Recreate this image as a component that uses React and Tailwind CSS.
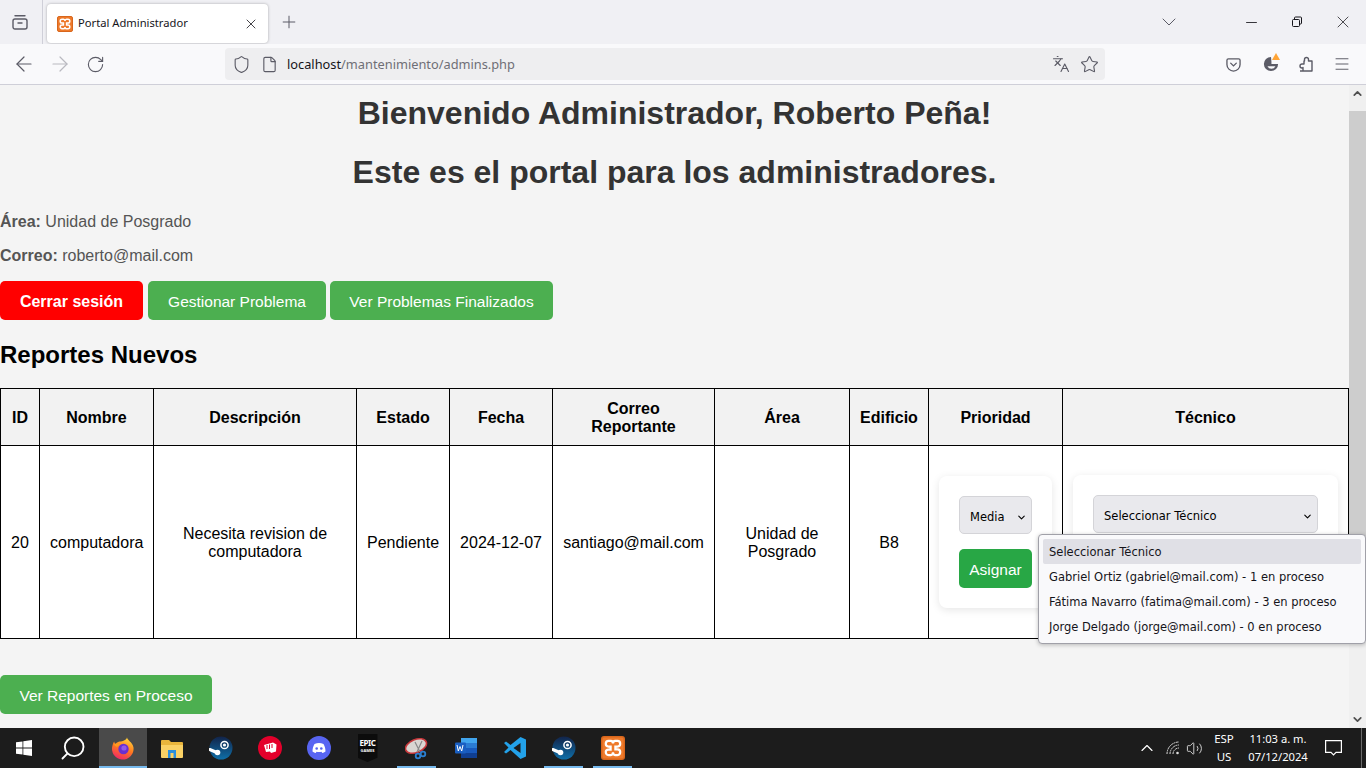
import React from "react";
import { ArrowLeft, ArrowRight, RotateCw, Shield, File, Star, Languages, Menu, ChevronDown, ChevronUp, Minus, X, Plus, Search, Volume2 } from "lucide-react";

const Xampp = ({ s = 16 }) => (
  <svg width={s} height={s} viewBox="0 0 16 16">
    <rect x="0.5" y="0.5" width="15" height="15" rx="1.5" fill="#ee7a2b" stroke="#d8661c" />
    <path d="M5 3.2h1.6c1 0 1.4 1 1.4 1.8 0-.8.4-1.8 1.4-1.8H11c1.2 0 1.8 1 1.8 2s-.8 1.800-1.800 1.800H9.600v1.900H11c1 0 1.800.8 1.800 1.800s-.6 2-1.800 2H9.400c-1 0-1.400-1-1.400-1.800 0 .8-.4 1.800-1.400 1.800H5c-1.200 0-1.800-1-1.800-2S4 9 5 9h1.400V7H5c-1 0-1.800-.8-1.800-1.800s.6-2 1.800-2z" fill="none" stroke="#fff" strokeWidth="1.5" />
  </svg>
);

const Steam = () => (
  <svg width="24" height="24" viewBox="0 0 24 24">
    <defs><linearGradient id="st" x1="0" y1="0" x2="0" y2="1"><stop offset="0" stopColor="#12244a" /><stop offset="1" stopColor="#0f6fa8" /></linearGradient></defs>
    <circle cx="12" cy="12" r="11.5" fill="url(#st)" />
    <circle cx="15.5" cy="9" r="3.6" fill="none" stroke="#fff" strokeWidth="1.5" />
    <circle cx="15.5" cy="9" r="1.6" fill="#fff" />
    <path d="M0.8 13.5l7 3" stroke="#fff" strokeWidth="3" strokeLinecap="round" />
    <circle cx="8.5" cy="16.5" r="2.8" fill="#fff" />
  </svg>
);

const TaskIcon = ({ children, active, underline, w = "w-[49px]" }) => (
  <div className={`relative ${w} h-10 flex items-center justify-center ${active ? "bg-[#4a4a4a]" : ""}`}>
    {children}
    {underline && <div className="absolute bottom-0 left-[5px] w-[39px] h-[2px] bg-[#76b9ed]" />}
    {active && <div className="absolute bottom-0 left-0 w-full h-[2px] bg-[#76b9ed]" />}
  </div>
);

const Th = ({ children }) => <th className="border border-black px-[10px] pt-[10px] pb-[8px] font-bold text-center leading-[18px]">{children}</th>;
const Td = ({ children }) => <td className="border border-black px-[10px] pt-[11px] pb-[10px] text-center leading-[18px]">{children}</td>;
const CardTd = ({ children }) => <td className="border border-black px-[10px] py-[10px] text-center leading-[18px]">{children}</td>;

const selectCls = "rounded-[5px] border border-[#d4d4d8] bg-[#e9e9ed] h-[38px] flex items-center text-[11.5px] text-black pt-[4px] font-['DejaVu_Sans',sans-serif]";

export default function App() {
  return (
    <div className="relative h-[768px] w-[1366px] overflow-hidden flex flex-col bg-[#f4f4f4] font-['Liberation_Sans',Arial,sans-serif]">
      {/* tab strip */}
      <div className="h-11 shrink-0 bg-[#f0f0f4] flex items-center">
        <div className="w-[43px] h-full flex items-center justify-center pr-[2px] border-r border-[#cfcfd8]">
          <svg width="16" height="16" viewBox="0 0 16 16" fill="none" stroke="#5b5b66" strokeWidth="1.4">
            <rect x="1" y="5" width="14" height="10" rx="2" />
            <path d="M3 1.700h10M6 9h4" strokeLinecap="round" />
          </svg>
        </div>
        <div className="ml-[4px] w-[221px] h-[39px] mt-[3px] rounded-[4px] bg-white shadow-[0_0_3px_rgba(0,0,0,0.3)] flex items-center pl-[10px] pr-[9px]">
          <Xampp s={16} />
          <span className="ml-[5px] text-[11.2px] text-[#15141a] font-['Noto_Sans',sans-serif]">Portal Administrador</span>
          <X className="ml-auto" size={16} color="#15141a" strokeWidth={1.2} />
        </div>
        <Plus className="ml-[11px]" size={20} color="#5b5b66" strokeWidth={1.2} />
        <ChevronDown className="ml-auto" size={24} color="#5b5b66" strokeWidth={1} />
        <div className="ml-[47px] w-[46px] flex justify-center"><Minus size={17} color="#15141a" strokeWidth={1.2} /></div>
        <div className="w-[46px] flex justify-center">
          <svg width="12" height="12" viewBox="0 0 12 12" fill="none" stroke="#15141a"><rect x="1.500" y="3.500" width="7" height="7" rx="1" /><path d="M3.500 3V2a1 1 0 0 1 1-1h5a1 1 0 0 1 1 1v5a1 1 0 0 1-1 1H9" /></svg>
        </div>
        <div className="w-[46px] flex justify-center"><X size={20} color="#15141a" strokeWidth={0.9} /></div>
      </div>
      {/* nav bar */}
      <div className="h-[41px] shrink-0 bg-[#f9f9fb] border-b border-[#cfcfd8] flex items-center">
        <ArrowLeft className="ml-[12px]" size={24} color="#5b5b66" strokeWidth={1.2} />
        <ArrowRight className="ml-[12px]" size={24} color="#b9b9c0" strokeWidth={1.2} />
        <RotateCw className="ml-[14px]" size={19} color="#5b5b66" strokeWidth={1.4} />
        <div className="ml-[120px] w-[880px] h-8 rounded-[4px] bg-[#eeeef0] flex items-center pl-[7px] pr-[6px]">
          <Shield size={19} color="#5b5b66" strokeWidth={1.4} />
          <File className="ml-[10px]" size={17} color="#5b5b66" strokeWidth={1.6} />
          <span className="ml-[9px] pt-[2px] text-[12.8px] font-['Noto_Sans',sans-serif] text-[#15141a]">localhost<span className="text-[#6e6e76]">/mantenimiento/admins.php</span></span>
          <Languages className="ml-auto" size={18} color="#5b5b66" strokeWidth={1.5} />
          <Star className="ml-[10px]" size={19} color="#5b5b66" strokeWidth={1.4} />
        </div>
        <svg className="ml-[121px]" width="15" height="15" viewBox="0 0 16 16" fill="none" stroke="#5b5b66" strokeWidth="1.4"><path d="M2.500 2h11A1.500 1.500 0 0 1 15 3.500V8a7 7 0 0 1-14 0V3.500A1.500 1.500 0 0 1 2.500 2z" /><path d="M5 6.500l3 3 3-3" strokeLinecap="round" /></svg>
        <div className="relative ml-[22px] w-[16px] h-[16px]">
          <svg width="16" height="16" viewBox="0 0 18 18"><path d="M9 1a8 8 0 1 0 8 8H9.500V6.500" fill="#5b5b66" /><path d="M5 11.500h9a5 5 0 0 1-9 0z" fill="#f9f9fb" /></svg>
          <div className="absolute -top-[3px] right-[-1px] w-0 h-0 border-l-[4px] border-r-[4px] border-b-[7px] border-l-transparent border-r-transparent border-b-[#ffa436]" />
        </div>
        <svg className="ml-[20px]" width="14" height="16" viewBox="0 0 14 16" fill="none" stroke="#5b5b66" strokeWidth="1.4" strokeLinejoin="round"><path d="M1 15h12V5H9.500V3.500a2 2 0 0 0-4 0V5H5v3H3a2 2 0 0 0 0 4h1v-.5 3.500" /></svg>
        <Menu className="ml-[20px]" size={18} color="#5b5b66" strokeWidth={1.3} />
      </div>
      {/* page */}
      <div className="relative flex-1 min-h-0 flex">
        <main className="flex-1 min-w-0 overflow-hidden">
          <h1 className="mt-[10px] text-[32px] leading-[37px] font-bold text-[#333] text-center">Bienvenido Administrador, Roberto Peña!</h1>
          <h2 className="mt-[22px] text-[32px] leading-[37px] font-bold text-[#333] text-center">Este es el portal para los administradores.</h2>
          <p className="mt-[22px] text-[16px] leading-[18px] text-[#555]"><b>Área:</b> Unidad de Posgrado</p>
          <p className="mt-[16px] text-[16px] leading-[18px] text-[#555]"><b>Correo:</b> roberto@mail.com</p>
          <div className="mt-[16px] flex gap-[5px] text-[15.5px]">
            <button className="h-[39px] w-[143px] pt-[3px] rounded-[5px] bg-[#ff0000] font-bold text-white text-[16px]">Cerrar sesión</button>
            <button className="h-[39px] w-[178px] pt-[3px] rounded-[5px] bg-[#4caf50] text-white">Gestionar Problema</button>
            <button className="h-[39px] w-[223px] pt-[3px] -ml-[1px] rounded-[5px] bg-[#4caf50] text-white">Ver Problemas Finalizados</button>
          </div>
          <h3 className="mt-[21px] text-[24px] leading-[28px] font-bold text-black">Reportes Nuevos</h3>
          <table className="mt-[19px] w-[1348.5px] table-fixed border-collapse bg-white text-[16px] text-black">
            <colgroup>
              <col className="w-[39px]" /><col className="w-[114px]" /><col className="w-[203px]" /><col className="w-[93px]" /><col className="w-[103px]" /><col className="w-[162px]" /><col className="w-[135px]" /><col className="w-[79px]" /><col className="w-[134px]" /><col className="w-[286px]" />
            </colgroup>
            <thead>
              <tr className="h-[57px] bg-[#f2f2f2]">
                <Th>ID</Th><Th>Nombre</Th><Th>Descripción</Th><Th>Estado</Th><Th>Fecha</Th><Th>Correo Reportante</Th><Th>Área</Th><Th>Edificio</Th><Th>Prioridad</Th><Th>Técnico</Th>
              </tr>
            </thead>
            <tbody>
              <tr className="h-[193px]">
                <Td>20</Td><Td>computadora</Td><Td>Necesita revision de computadora</Td><Td>Pendiente</Td><Td>2024-12-07</Td><Td>santiago@mail.com</Td><Td>Unidad de Posgrado</Td><Td>B8</Td>
                <CardTd>
                  <div className="rounded-[8px] bg-white shadow-[0_2px_8px_rgba(0,0,0,0.1)] p-5 flex flex-col gap-[15px]">
                    <div className={`${selectCls} justify-between pl-[10px] pr-[4px]`}>Media <ChevronDown size={11} color="#000" strokeWidth={2.4} /></div>
                    <button className="h-[39px] pt-[3px] rounded-[5px] bg-[#28a745] text-white text-[15.5px]">Asignar</button>
                  </div>
                </CardTd>
                <CardTd>
                  <div className="rounded-[8px] bg-white shadow-[0_2px_8px_rgba(0,0,0,0.1)] p-5 h-[134px]">
                    <div className={`${selectCls} justify-between pl-[10px] pr-[4px]`}>Seleccionar Técnico <ChevronDown size={11} color="#000" strokeWidth={2.4} /></div>
                  </div>
                </CardTd>
              </tr>
            </tbody>
          </table>
          <button className="mt-[36px] block h-[39px] w-[212px] pt-[3px] rounded-[5px] bg-[#4caf50] text-white text-[15.5px]">Ver Reportes en Proceso</button>
        </main>
        {/* scrollbar */}
        <div className="w-[17px] shrink-0 bg-[#f0f0f0] flex flex-col items-center">
          <div className="h-[17px] flex items-center justify-center"><ChevronUp size={13} color="#505050" strokeWidth={3.2} /></div>
          <div className="w-[17px] h-[530px] bg-[#cdcdcd] mt-[9px]" />
          <div className="mt-auto h-[17px] flex items-center justify-center"><ChevronDown size={13} color="#505050" strokeWidth={3.2} /></div>
        </div>
        {/* native dropdown popup, over the page and the scrollbar */}
        <div className="absolute left-[1038px] top-[449px] w-[328px] h-[110px] z-10 rounded-[4px] border border-[#a0a0a8] bg-[#f9f9fb] p-1 shadow-[0_1px_4px_rgba(0,0,0,0.25)] text-[11.5px] text-[#15141a] font-['DejaVu_Sans',sans-serif]">
          <div className="h-[25px] flex items-center px-[6px] pt-[2px] rounded-[2px] bg-[#e0e0e6]">Seleccionar Técnico</div>
          <div className="h-[25px] flex items-center px-[6px] pt-[2px]">Gabriel Ortiz (gabriel@mail.com) - 1 en proceso</div>
          <div className="h-[25px] flex items-center px-[6px] pt-[2px]">Fátima Navarro (fatima@mail.com) - 3 en proceso</div>
          <div className="h-[25px] flex items-center px-[6px] pt-[2px]">Jorge Delgado (jorge@mail.com) - 0 en proceso</div>
        </div>
      </div>
      {/* taskbar */}
      <div className="h-10 shrink-0 bg-[#1c1c1c] flex items-center font-['Noto_Sans',sans-serif]">
        <TaskIcon w="w-[47px]">
          <svg width="16" height="16" viewBox="0 0 16 16" fill="#fff"><path d="M0 2.300l6.500-.9v6.200H0zM7.300 1.300L16 0v7.600H7.300zM0 8.400h6.500v6.200L0 13.700zM7.300 8.400H16V16l-8.700-1.200z" /></svg>
        </TaskIcon>
        <TaskIcon w="w-[52px]"><Search size={28} color="#fff" strokeWidth={1.6} className="-scale-x-100" /></TaskIcon>
        <TaskIcon active w="w-[48px]">
          <svg width="24" height="24" viewBox="0 0 24 24">
            <defs><linearGradient id="ff" x1="0.7" y1="0" x2="0.3" y2="1"><stop offset="0" stopColor="#ffd93b" /><stop offset="0.5" stopColor="#ff7a1f" /><stop offset="1" stopColor="#f0246a" /></linearGradient></defs>
            <path d="M16 1c-.5 3 5.500 5 6.500 10.500A10.800 10.800 0 1 1 1.500 9.500c.3-1.500 1-3 1.700-4 .1 1.300.6 2 1.300 2.500C6 6 8 5.500 10 5.500c2.500-.5 6-2 6-4.500z" fill="url(#ff)" />
            <circle cx="12.500" cy="13" r="5.200" fill="#6a2fd0" />
            <circle cx="13" cy="12" r="2.600" fill="#9159e8" />
            <path d="M3 8c2.500-1 5-.5 7 1-1.500 0-3 .5-4 2-1-.5-2.500-1-3-3z" fill="#ff9a1f" />
          </svg>
        </TaskIcon>
        <TaskIcon>
          <svg width="22" height="20" viewBox="0 0 22 20"><path d="M0 3a1 1 0 0 1 1-1h7l2 2h11a1 1 0 0 1 1 1v14H0z" fill="#e9b53c" /><path d="M0 7h22v12a1 1 0 0 1-1 1H1a1 1 0 0 1-1-1z" fill="#fad165" /><path d="M7 12h8v8H7z" fill="#2b8fdc" /><path d="M9.500 15h3v5h-3z" fill="#fad165" /></svg>
        </TaskIcon>
        <TaskIcon><Steam /></TaskIcon>
        <TaskIcon>
          <svg width="24" height="24" viewBox="0 0 24 24"><circle cx="12" cy="12" r="12" fill="#e4002b" /><path d="M6 9l9-2.500 3.500 2-.5 7-5 1.500-1-1.500-4 .5z" fill="#fff" /><path d="M9 9v4M11.500 8.500v4.500M14 8v4" stroke="#e4002b" strokeWidth="1" /></svg>
        </TaskIcon>
        <TaskIcon>
          <svg width="24" height="24" viewBox="0 0 24 24"><circle cx="12" cy="12" r="12" fill="#5865f2" /><path d="M7.500 8c3-1.300 6-1.300 9 0 1.300 2.300 2 4.700 2 7.500-1 .8-2.200 1.300-3.200 1.500l-.8-1.300c-1.600.5-3.400.5-5 0L8.700 17c-1-.2-2.200-.7-3.200-1.500 0-2.800.7-5.200 2-7.500z" fill="#fff" /><circle cx="9.700" cy="12.500" r="1.300" fill="#5865f2" /><circle cx="14.300" cy="12.500" r="1.300" fill="#5865f2" /></svg>
        </TaskIcon>
        <TaskIcon>
          <div className="w-[20px] h-[28px] bg-[#0c0c0c] flex flex-col items-center justify-start pt-[4px] leading-none text-white [clip-path:polygon(0_0,100%_0,100%_85%,50%_100%,0_85%)]">
            <span className="text-[8px] font-bold leading-[10px] tracking-tighter">EPIC</span>
            <span className="text-[4px] font-bold leading-[6px]">GAMES</span>
          </div>
        </TaskIcon>
        <TaskIcon underline>
          <svg width="24" height="24" viewBox="0 0 24 24"><ellipse cx="11" cy="10" rx="11" ry="6.500" transform="rotate(-22 11 10)" fill="#d9d6d2" stroke="#c8383c" strokeWidth="1.600" /><path d="M10 6l5 10M17 5l-5 11" stroke="#888" strokeWidth="1.200" /><circle cx="13" cy="20" r="2.300" fill="none" stroke="#2b7fd0" strokeWidth="1.800" /><circle cx="18" cy="18" r="2.300" fill="none" stroke="#2b7fd0" strokeWidth="1.800" /></svg>
        </TaskIcon>
        <TaskIcon>
          <svg width="24" height="24" viewBox="0 0 24 24"><rect x="7" y="2" width="16" height="5" fill="#41a5ee" /><rect x="7" y="7" width="16" height="5" fill="#2b7cd3" /><rect x="7" y="12" width="16" height="5" fill="#185abd" /><rect x="7" y="17" width="16" height="5" fill="#103f91" /><rect x="1" y="6.500" width="11" height="11" rx="1" fill="#1a5fc2" /><path d="M3 9l1.300 6 1.700-4.500L7.700 15 9 9" fill="none" stroke="#fff" strokeWidth="1" /></svg>
        </TaskIcon>
        <TaskIcon>
          <svg width="24" height="24" viewBox="0 0 24 24"><path d="M17.500 1L23 3.500v17L17.500 23 7.500 14l-4.500 3.500L1 16l4.500-4.500L1 7l2-1.500L7.500 9z" fill="#23a2ea" /><path d="M17.500 7L10.500 12l7 5z" fill="#1c1c1c" /></svg>
        </TaskIcon>
        <TaskIcon underline><Steam /></TaskIcon>
        <TaskIcon underline><Xampp s={24} /></TaskIcon>
        <div className="ml-auto flex items-center text-white text-[11.5px] h-10 pr-[5px]">
          <ChevronUp size={20} color="#fff" strokeWidth={1.4} />
          <svg className="ml-[9px]" width="14" height="14" viewBox="0 0 14 14" fill="none" stroke="#ddd" strokeWidth="1"><path d="M1 13A12 12 0 0 1 13 1M4 13a9 9 0 0 1 9-9M7 13a6 6 0 0 1 6-6" strokeDasharray="2 .6" /><circle cx="11.500" cy="12" r="1.300" fill="#ddd" stroke="none" /></svg>
          <Volume2 className="ml-[6px]" size={17} color="#ddd" strokeWidth={1.3} />
          <div className="ml-[9px] w-[24px] flex flex-col items-center leading-[18px] text-center"><span>ESP</span><span>US</span></div>
          <div className="ml-[12px] w-[60px] flex flex-col items-center leading-[18px] whitespace-nowrap text-[11.2px]"><span>11:03 a. m.</span><span>07/12/2024</span></div>
          <svg className="ml-[17px] mr-[19px]" width="17" height="16" viewBox="0 0 17 16" fill="none" stroke="#fff" strokeWidth="1.200"><path d="M.6.600h15.800v11.800h-5.400L8.500 15 6 12.400H.6z" /></svg>
          <div className="absolute right-[4px] bottom-0 w-[1px] h-10 bg-[#6a6a6a]" />
        </div>
      </div>
    </div>
  );
}
